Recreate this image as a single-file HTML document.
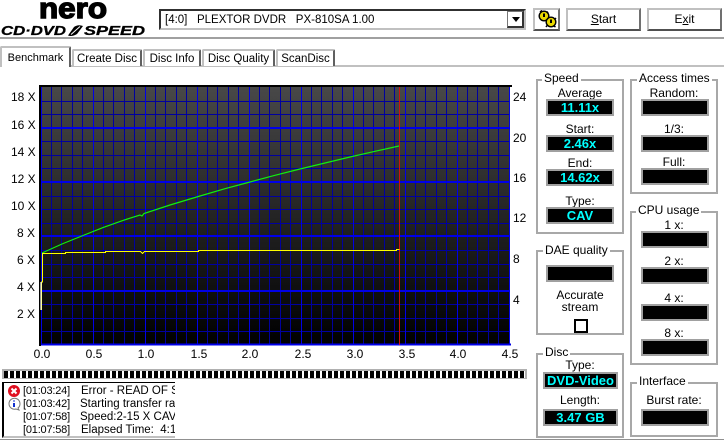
<!DOCTYPE html>
<html><head><meta charset="utf-8">
<style>
html,body{margin:0;padding:0;background:#fff}
#p{position:relative;width:724px;height:441px;overflow:hidden;background:#fff;font:12px/14px "Liberation Sans",sans-serif;color:#000}
#p div,#p span.a{position:absolute;box-sizing:border-box}
.t{white-space:nowrap}
.c{text-align:center;white-space:nowrap}
.box{border:2px solid #a8a8a8}
.lg{background:#fff;padding:0 2px;white-space:nowrap;line-height:13px;height:14px}
.f{background:#000;border:2px solid #a0a0a0;color:#0ff;font:bold 13px/13px "Liberation Sans",sans-serif;text-align:center;white-space:nowrap}
.btn{background:#fff;border:1px solid #000;border-top:2px solid #c0c0c0;border-left:2px solid #c0c0c0;border-right:2px solid #707070;border-bottom:2px solid #505050;text-align:center;line-height:19px}
.tab{background:#fff;border:2px solid #c0c0c0;border-bottom:0;border-right:2px solid #606060;text-align:center;border-radius:2px 2px 0 0;white-space:nowrap;line-height:15px;font-size:11.5px}
.log{font-size:11.5px}
.tm{font-size:11px;letter-spacing:-.2px}
</style></head><body><div id="p">

<!-- logo -->
<svg style="position:absolute;left:0;top:0" width="150" height="38">
<text x="39" y="18" font-family="Liberation Sans" font-weight="bold" font-size="29" textLength="68" lengthAdjust="spacingAndGlyphs" stroke="#000" stroke-width="1.4">nero</text>
<text x="1" y="35" font-family="Liberation Sans" font-weight="bold" font-style="italic" font-size="12.5" textLength="65" lengthAdjust="spacingAndGlyphs" stroke="#000" stroke-width=".3">CD·DVD</text>
<text x="84" y="35" font-family="Liberation Sans" font-weight="bold" font-style="italic" font-size="12.5" textLength="61" lengthAdjust="spacingAndGlyphs" stroke="#000" stroke-width=".3">SPEED</text>
<path d="M68 35.5 L74 27 Q78 24 83 26 L77 34 Q72 37 68 35.5Z" fill="#000"/>
<path d="M71 34.5 L80 26.5" stroke="#fff" stroke-width="1"/>
</svg>

<!-- header line -->
<div style="left:0;top:37px;width:724px;height:2px;background:#a0a0a0"></div>

<!-- combo -->
<div style="left:159px;top:9px;width:367px;height:21px;background:#fff;border-top:2px solid #303030;border-left:2px solid #303030;border-right:2px solid #c0c0c0;border-bottom:2px solid #c0c0c0"></div>
<div class="t" style="left:165px;top:13px;font-size:11.5px">[4:0]&nbsp;&nbsp; PLEXTOR DVDR&nbsp;&nbsp; PX-810SA 1.00</div>
<div style="left:507px;top:11px;width:17px;height:17px;background:#fff;border:1px solid #777;border-right:2px solid #333;border-bottom:2px solid #333"></div>
<svg style="position:absolute;left:511px;top:17px" width="10" height="6"><path d="M1 0H9L5 5Z" fill="#000"/></svg>

<!-- gear button -->
<div class="btn" style="left:533px;top:8px;width:27px;height:23px"></div>
<svg style="position:absolute;left:535px;top:10px" width="24" height="20">
<circle cx="9" cy="6" r="4.8" fill="#e8d800" stroke="#000" stroke-width="1.4"/>
<circle cx="16" cy="12" r="4.8" fill="#e8d800" stroke="#000" stroke-width="1.4"/>
<path d="M5 2L7 0.5M12 1.5L13 3M20 8L21 9M12 15.5L11 17M19 16L20.5 17" stroke="#000" stroke-width="1.5"/>
<path d="M9 3.5V7M16 9.5V13" stroke="#000" stroke-width="2"/>
</svg>

<div class="btn" style="left:566px;top:8px;width:75px;height:23px"><u>S</u>tart</div>
<div class="btn" style="left:647px;top:8px;width:75px;height:23px">E<u>x</u>it</div>

<!-- tab body line -->
<div style="left:0;top:65px;width:724px;height:2px;background:#c0c0c0"></div>
<div class="tab" style="left:72px;top:49px;width:70px;height:17px;padding-top:1px">Create Disc</div>
<div class="tab" style="left:143px;top:49px;width:58px;height:17px;padding-top:1px">Disc Info</div>
<div class="tab" style="left:202px;top:49px;width:73px;height:17px;padding-top:1px">Disc Quality</div>
<div class="tab" style="left:276px;top:49px;width:59px;height:17px;padding-top:1px">ScanDisc</div>
<div class="tab" style="left:0;top:46px;width:71px;height:21px;padding-top:3px;font-size:11px">Benchmark</div>

<!-- chart -->
<svg style="position:absolute;left:0;top:0" width="724" height="441">
<defs><linearGradient id="g" x1="0" y1="0" x2="0" y2="1"><stop offset="0" stop-color="#484848"/><stop offset="1" stop-color="#000"/></linearGradient></defs>
<rect x="39" y="85" width="473" height="2" fill="#000"/>
<rect x="39" y="85" width="2" height="261" fill="#000"/>
<rect x="41" y="87" width="469" height="258" fill="url(#g)"/>
<path shape-rendering="crispEdges" d="M51.5 87V345M61.5 87V345M72.5 87V345M82.5 87V345M103.5 87V345M113.5 87V345M124.5 87V345M134.5 87V345M155.5 87V345M165.5 87V345M176.5 87V345M186.5 87V345M207.5 87V345M217.5 87V345M228.5 87V345M238.5 87V345M259.5 87V345M269.5 87V345M280.5 87V345M290.5 87V345M311.5 87V345M321.5 87V345M332.5 87V345M342.5 87V345M363.5 87V345M373.5 87V345M384.5 87V345M394.5 87V345M415.5 87V345M425.5 87V345M436.5 87V345M446.5 87V345M467.5 87V345M477.5 87V345M488.5 87V345M498.5 87V345M41 331.5H510M41 318.5H510M41 304.5H510M41 277.5H510M41 264.5H510M41 250.5H510M41 223.5H510M41 209.5H510M41 196.5H510M41 168.5H510M41 155.5H510M41 141.5H510M41 114.5H510M41 101.5H510" stroke="#0000a0" stroke-width="1" fill="none"/>
<path shape-rendering="crispEdges" d="M41.5 87V345M93.5 87V345M145.5 87V345M197.5 87V345M249.5 87V345M301.5 87V345M353.5 87V345M405.5 87V345M457.5 87V345M509.5 87V345" stroke="#0000e8" stroke-width="1" fill="none"/>
<path shape-rendering="crispEdges" d="M41 344.5H511M41 291H510M41 236H510M41 182H510M41 128H510" stroke="#0000e8" stroke-width="2" fill="none"/>
<path shape-rendering="crispEdges" d="M399.5 87V345" stroke="#d01010" stroke-width="1"/>
<polyline fill="none" stroke="#10f010" stroke-width="1.2" points="42,253 62,244 83,235.5 103,227.6 123,220.4 140,215 142,216 144,213.5 170,205 200,196 225,188.7 250,182 275,175.3 300,169 325,163 350,157 375,151.3 399,146"/>
<polyline shape-rendering="crispEdges" fill="none" stroke="#ffff00" stroke-width="1" points="41.5,310 41.5,282 42.5,282 42.5,253.5 65.5,253.5 65.5,252.5 105.5,252.5 105.5,251.5 140.5,251.5 142.5,253.5 144.5,251.5 198.5,251.5 198.5,250.5 396.5,250.5 396.5,249.5 399.5,249.5"/>
<rect x="40" y="282" width="2" height="28" fill="#fff" opacity=".6"/>
</svg>

<!-- y labels left -->
<div class="t" style="left:11px;top:90px">18 X</div>
<div class="t" style="left:11px;top:118px">16 X</div>
<div class="t" style="left:11px;top:145px">14 X</div>
<div class="t" style="left:11px;top:172px">12 X</div>
<div class="t" style="left:11px;top:199px">10 X</div>
<div class="t" style="left:17px;top:226px">8 X</div>
<div class="t" style="left:17px;top:253px">6 X</div>
<div class="t" style="left:17px;top:280px">4 X</div>
<div class="t" style="left:17px;top:307px">2 X</div>
<!-- y labels right -->
<div class="t" style="left:513px;top:90px">24</div>
<div class="t" style="left:513px;top:131px">20</div>
<div class="t" style="left:513px;top:171px">16</div>
<div class="t" style="left:513px;top:211px">12</div>
<div class="t" style="left:513px;top:252px">8</div>
<div class="t" style="left:513px;top:293px">4</div>
<!-- x labels -->
<div class="c" style="left:22px;top:347px;width:40px">0.0</div>
<div class="c" style="left:74px;top:347px;width:40px">0.5</div>
<div class="c" style="left:126px;top:347px;width:40px">1.0</div>
<div class="c" style="left:179px;top:347px;width:40px">1.5</div>
<div class="c" style="left:230px;top:347px;width:40px">2.0</div>
<div class="c" style="left:283px;top:347px;width:40px">2.5</div>
<div class="c" style="left:335px;top:347px;width:40px">3.0</div>
<div class="c" style="left:387px;top:347px;width:40px">3.5</div>
<div class="c" style="left:438px;top:347px;width:40px">4.0</div>
<div class="c" style="left:490px;top:347px;width:40px">4.5</div>

<!-- progress -->
<div style="left:2px;top:369px;width:525px;height:10px;border:1px solid #b0b0b0;border-width:2px 2px 1px 2px;background:repeating-linear-gradient(90deg,#000 0,#000 4px,#fff 4px,#fff 6px)"></div>

<!-- log -->
<div class="log" style="left:2px;top:382px;width:173px;height:56px;border-top:1px solid #000;border-left:2px solid #000;border-bottom:2px solid #c0c0c0;overflow:hidden;background:#fff">
<div class="t tm" style="left:19px;top:1px">[01:03:24]</div><div class="t" style="left:77px;top:1px">Error - READ OF SECTOR</div>
<div class="t tm" style="left:19px;top:14px">[01:03:42]</div><div class="t" style="left:76px;top:14px">Starting transfer rate test</div>
<div class="t tm" style="left:19px;top:27px">[01:07:58]</div><div class="t" style="left:76px;top:27px">Speed:2-15 X CAV (11.11 X)</div>
<div class="t tm" style="left:19px;top:40px">[01:07:58]</div><div class="t" style="left:77px;top:40px">Elapsed Time:&nbsp; 4:16</div>
</div>
<svg style="position:absolute;left:6px;top:384px" width="16" height="28">
<circle cx="8" cy="7" r="6" fill="#e01020"/><path d="M5.5 4.5L10.5 9.5M10.5 4.5L5.5 9.5" stroke="#fff" stroke-width="2"/>
<path d="M3 20a5.5 5.5 0 1 1 9 4l1 2-3-1a5.5 5.5 0 0 1-7-5Z" fill="#fff" stroke="#777" stroke-width="1"/>
<path d="M8 16.5V17.5M8 19V23" stroke="#1030d0" stroke-width="2"/>
</svg>

<!-- Speed -->
<div class="box" style="left:536px;top:79px;width:88px;height:155px"></div>
<div class="lg" style="left:542px;top:72px">Speed</div>
<div class="c" style="left:536px;top:86px;width:88px">Average</div>
<div class="f" style="left:546px;top:99px;width:68px;height:17px">11.11x</div>
<div class="c" style="left:536px;top:122px;width:88px">Start:</div>
<div class="f" style="left:546px;top:135px;width:68px;height:17px">2.46x</div>
<div class="c" style="left:536px;top:156px;width:88px">End:</div>
<div class="f" style="left:546px;top:169px;width:68px;height:17px">14.62x</div>
<div class="c" style="left:536px;top:194px;width:88px">Type:</div>
<div class="f" style="left:546px;top:207px;width:68px;height:17px">CAV</div>

<!-- Access times -->
<div class="box" style="left:630px;top:79px;width:88px;height:115px"></div>
<div class="lg" style="left:637px;top:72px">Access times</div>
<div class="c" style="left:630px;top:86px;width:88px">Random:</div>
<div class="f" style="left:641px;top:99px;width:68px;height:17px"></div>
<div class="c" style="left:630px;top:122px;width:88px">1/3:</div>
<div class="f" style="left:641px;top:135px;width:68px;height:17px"></div>
<div class="c" style="left:630px;top:155px;width:88px">Full:</div>
<div class="f" style="left:641px;top:168px;width:68px;height:17px"></div>

<!-- CPU -->
<div class="box" style="left:630px;top:211px;width:88px;height:154px"></div>
<div class="lg" style="left:636px;top:204px">CPU usage</div>
<div class="c" style="left:630px;top:218px;width:88px">1 x:</div>
<div class="f" style="left:641px;top:231px;width:68px;height:17px"></div>
<div class="c" style="left:630px;top:254px;width:88px">2 x:</div>
<div class="f" style="left:641px;top:267px;width:68px;height:17px"></div>
<div class="c" style="left:630px;top:291px;width:88px">4 x:</div>
<div class="f" style="left:641px;top:304px;width:68px;height:17px"></div>
<div class="c" style="left:630px;top:326px;width:88px">8 x:</div>
<div class="f" style="left:641px;top:339px;width:68px;height:17px"></div>

<!-- DAE -->
<div class="box" style="left:536px;top:250px;width:88px;height:85px"></div>
<div class="lg" style="left:543px;top:244px">DAE quality</div>
<div class="f" style="left:546px;top:265px;width:68px;height:17px"></div>
<div class="c" style="left:536px;top:288px;width:88px">Accurate</div>
<div class="c" style="left:536px;top:300px;width:88px">stream</div>
<div style="left:574px;top:319px;width:14px;height:14px;border:2px solid #000;background:#fff"></div>

<!-- Disc -->
<div class="box" style="left:536px;top:353px;width:88px;height:85px"></div>
<div class="lg" style="left:543px;top:346px">Disc</div>
<div class="c" style="left:536px;top:358px;width:88px">Type:</div>
<div class="f" style="left:543px;top:372px;width:75px;height:17px">DVD-Video</div>
<div class="c" style="left:536px;top:393px;width:88px">Length:</div>
<div class="f" style="left:543px;top:409px;width:75px;height:17px">3.47 GB</div>

<!-- Interface -->
<div class="box" style="left:630px;top:382px;width:88px;height:55px"></div>
<div class="lg" style="left:637px;top:375px">Interface</div>
<div class="c" style="left:630px;top:393px;width:88px">Burst rate:</div>
<div class="f" style="left:641px;top:409px;width:68px;height:17px"></div>

<div style="left:0;top:439px;width:724px;height:1px;background:#909090"></div>
</div></body></html>
